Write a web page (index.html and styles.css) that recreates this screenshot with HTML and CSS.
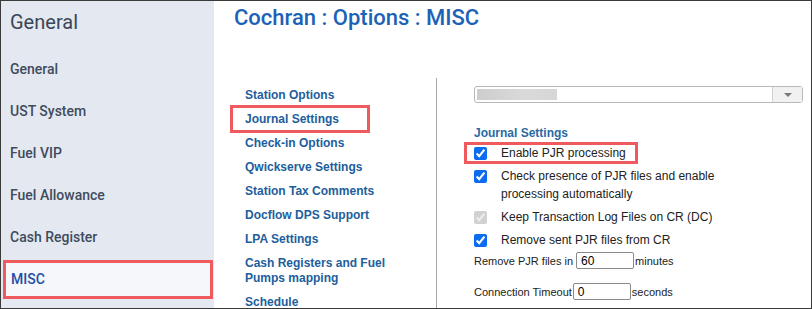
FILE: index.html
```html
<!DOCTYPE html>
<html lang="en">
<head>
    <meta charset="UTF-8">
    <meta name="viewport" content="width=device-width, initial-scale=1.0">
    <title>Cochran : Options : MISC</title>
    <link rel="stylesheet" href="styles.css">
</head>
<body>
    <div class="frame">
        <div class="sidebar">
            <h2 class="sidebar-title">General</h2>
            <div class="side-item">General</div>
            <div class="side-item">UST System</div>
            <div class="side-item">Fuel VIP</div>
            <div class="side-item">Fuel Allowance</div>
            <div class="side-item">Cash Register</div>
            <div class="side-item active">MISC</div>
        </div>
        <div class="main">
            <h1 class="page-title">Cochran : Options : MISC</h1>
            <div class="content">
                <div class="submenu">
                    <a class="sub-link">Station Options</a>
                    <a class="sub-link"><span class="marked">Journal Settings</span></a>
                    <a class="sub-link">Check-in Options</a>
                    <a class="sub-link">Qwickserve Settings</a>
                    <a class="sub-link">Station Tax Comments</a>
                    <a class="sub-link">Docflow DPS Support</a>
                    <a class="sub-link">LPA Settings</a>
                    <a class="sub-link">Cash Registers and Fuel Pumps mapping</a>
                    <a class="sub-link">Schedule</a>
                </div>
                <div class="panel">
                    <div class="select">
                        <div class="select-value"><span class="blur"></span></div>
                        <div class="select-btn"><span class="caret"></span></div>
                    </div>
                    <h3 class="panel-heading">Journal Settings</h3>
                    <label class="check marked-row">
                        <input type="checkbox" checked>
                        <span class="check-text">Enable PJR processing</span>
                    </label>
                    <label class="check">
                        <input type="checkbox" checked>
                        <span class="check-text">Check presence of PJR files and enable processing automatically</span>
                    </label>
                    <label class="check">
                        <input type="checkbox" checked disabled>
                        <span class="check-text">Keep Transaction Log Files on CR (DC)</span>
                    </label>
                    <label class="check">
                        <input type="checkbox" checked>
                        <span class="check-text">Remove sent PJR files from CR</span>
                    </label>
                    <div class="field first-field">
                        <span>Remove PJR files in</span>
                        <input class="num gap" type="text" value="60">
                        <span>minutes</span>
                    </div>
                    <div class="field second-field">
                        <span>Connection Timeout</span>
                        <input class="num" type="text" value="0">
                        <span>seconds</span>
                    </div>
                </div>
            </div>
        </div>
    </div>
</body>
</html>
```

FILE: styles.css
```css
body {
    margin: 0;
    background: #fff;
}

.frame {
    width: 812px;
    height: 309px;
    box-sizing: border-box;
    border: 1px solid #3a3a3a;
    display: flex;
    overflow: hidden;
}

/* left navigation */
.sidebar {
    width: 213px;
    flex-shrink: 0;
    background-color: #e4e9f1;
    font-family: Roboto, "Liberation Sans", sans-serif;
    padding-top: 7px;
}
.sidebar-title {
    margin: 0 0 14px 9px;
    font-size: 20px;
    font-weight: 400;
    line-height: 28px;
    color: #3b4657;
}
.side-item {
    height: 39px;
    line-height: 39px;
    margin-bottom: 3px;
    padding-left: 9px;
    font-size: 14px;
    font-weight: 500;
    color: #404b5c;
}
.side-item.active {
    margin: 0 1px 0 2px;
    padding-left: 5px;
    height: 33px;
    line-height: 33px;
    border: 3px solid #ee5a5e;
    background-color: #f5f7fa;
    color: #1f4fa8;
}

/* main area */
.main {
    flex: 1;
    display: flex;
    flex-direction: column;
}
.page-title {
    margin: 3px 0 0 20px;
    font-family: Roboto, "Liberation Sans", sans-serif;
    font-size: 22px;
    font-weight: 500;
    line-height: 28px;
    color: #1c62b6;
}
.content {
    display: flex;
    margin-top: 46px;
    flex: 1;
    font-family: "Liberation Sans", Arial, sans-serif;
}
.submenu {
    width: 191px;
    padding: 10px 0 0 31px;
    flex-shrink: 0;
}
.sub-link {
    display: block;
    max-width: 160px;
    margin-bottom: 9px;
    font-size: 12px;
    font-weight: bold;
    line-height: 15px;
    color: #215e9c;
}
.marked {
    display: inline-block;
    position: relative;
}
.marked::after {
    content: "";
    position: absolute;
    top: -7px;
    bottom: -6px;
    left: -15px;
    right: -31px;
    border: 3px solid #ee5a5e;
}

.panel {
    flex: 1;
    border-left: 1px solid #a8a8a8;
    padding: 8px 8px 0 37px;
}
.select {
    display: flex;
    border: 1px solid #b8b8b8;
    border-radius: 3px;
    box-sizing: border-box;
    height: 17px;
}
.select-value {
    flex: 1;
    padding: 2px 2px;
}
.blur {
    display: block;
    width: 80px;
    height: 11px;
    background: linear-gradient(90deg, #cdcdcd, #dadada 60%, #d6d6d6);
}
.select-btn {
    width: 29px;
    border-left: 1px solid #d0d0d0;
    background-color: #f1f1f1;
    display: flex;
    align-items: center;
    justify-content: center;
}
.caret {
    width: 0;
    height: 0;
    border-left: 4px solid transparent;
    border-right: 4px solid transparent;
    border-top: 4px solid #7a7a7a;
}
.panel-heading {
    margin: 23px 0 0 0;
    font-size: 12px;
    font-weight: bold;
    line-height: 15px;
    color: #2a69a3;
}

.check {
    display: flex;
    align-items: flex-start;
    width: max-content;
    margin-top: 5px;
    font-size: 12px;
    line-height: 18px;
    color: #222;
}
.marked-row {
    margin-top: 3px;
    position: relative;
}
.marked-row::after {
    content: "";
    position: absolute;
    top: -2px;
    bottom: -2px;
    left: -10px;
    right: -12px;
    border: 3px solid #ee5a5e;
}
.check input {
    width: 13px;
    height: 13px;
    margin: 3px 14px 0 0;
    accent-color: #0b6cf0;
}
.check-text {
    max-width: 240px;
}

.field {
    display: flex;
    align-items: center;
    height: 19px;
    font-size: 11px;
    color: #222;
}
.first-field {
    margin-top: 2px;
}
.second-field {
    margin-top: 12px;
}
.num {
    width: 58px;
    height: 17px;
    box-sizing: border-box;
    border: 1px solid #8a8a8a;
    border-radius: 2px;
    padding: 1px 4px 0;
    font-family: "Liberation Sans", Arial, sans-serif;
    font-size: 12px;
    margin: 0 1px;
}
.num.gap {
    margin-left: 3px;
}
```
